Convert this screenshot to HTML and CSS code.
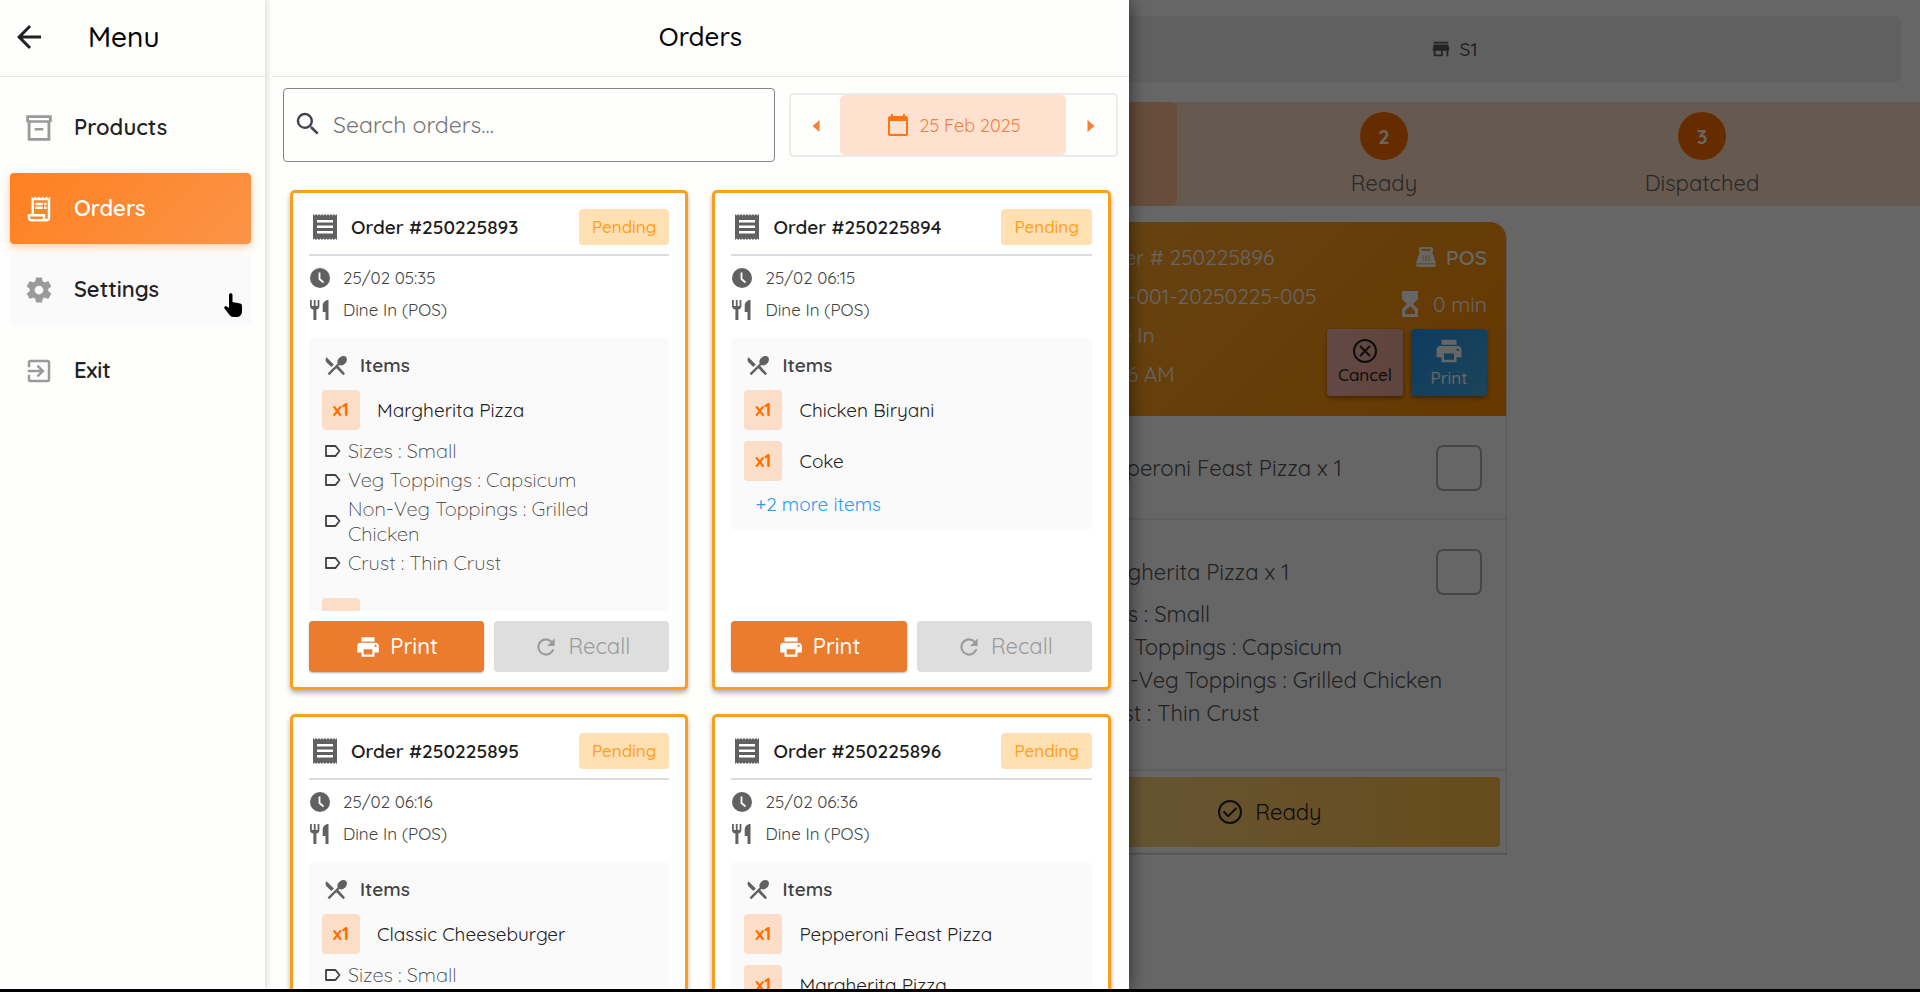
FILE: index.html
```html
<!DOCTYPE html>
<html lang="en">

<head>
    <meta charset="UTF-8">
    <meta name="viewport" content="width=device-width, initial-scale=1.0">
    <title>Orders</title>
    <link rel="stylesheet" href="styles.css">
</head>

<body>

    <!-- icon sprite -->
    <svg class="sprite" aria-hidden="true">
        <symbol id="i-back" viewBox="0 0 24 24"><path d="M20 11H7.83l5.59-5.59L12 4l-8 8 8 8 1.41-1.41L7.83 13H20v-2z"/></symbol>
        <symbol id="i-archive" viewBox="0 0 24 24"><path d="M21 3H3v5h1v13h16V8h1V3zM5 5h14v1.500H5V5zm13 14H6V8.300h12V19zm-9-7h6v1.800H9V12z"/></symbol>
        <symbol id="i-receipt-long" viewBox="0 0 24 24"><path d="M19.500 3.500 18 2l-1.500 1.500L15 2l-1.500 1.500L12 2l-1.500 1.500L9 2 7.500 3.500 6 2v14H3v3c0 1.660 1.340 3 3 3h12c1.660 0 3-1.340 3-3V2l-1.500 1.500zM15 20H6c-.55 0-1-.45-1-1v-1h10v2zm4-1c0 .55-.45 1-1 1s-1-.45-1-1v-3H8V5h11v14z"/><path d="M9 7h6v2H9zM16 7h2v2h-2zM9 10h6v2H9zM16 10h2v2h-2z"/></symbol>
        <symbol id="i-gear" viewBox="0 0 24 24"><path d="M19.430 12.980c.04-.32.07-.64.07-.98s-.03-.66-.07-.98l2.110-1.650c.19-.15.24-.42.12-.64l-2-3.460c-.12-.22-.39-.3-.61-.22l-2.490 1c-.52-.4-1.080-.73-1.690-.98l-.38-2.650C14.460 2.180 14.250 2 14 2h-4c-.25 0-.46.18-.49.42l-.38 2.650c-.61.25-1.170.59-1.690.98l-2.490-1c-.23-.09-.49 0-.61.22l-2 3.460c-.13.22-.07.49.12.64l2.110 1.650c-.04.32-.07.65-.07.98s.03.66.07.98l-2.110 1.650c-.19.15-.24.42-.12.64l2 3.460c.12.22.39.3.61.22l2.490-1c.52.4 1.080.73 1.690.98l.38 2.650c.03.24.24.42.49.42h4c.25 0 .46-.18.49-.42l.38-2.650c.61-.25 1.170-.59 1.690-.98l2.490 1c.23.09.49 0 .61-.22l2-3.460c.12-.22.07-.49-.12-.64l-2.110-1.650zM12 15.500c-1.930 0-3.500-1.570-3.500-3.500s1.570-3.500 3.500-3.500 3.500 1.570 3.500 3.500-1.570 3.500-3.500 3.500z"/></symbol>
        <symbol id="i-exit" viewBox="0 0 24 24"><path d="M10.090 15.590 11.500 17l5-5-5-5-1.410 1.410L12.670 11H3v2h9.670l-2.580 2.590zM19 3H5c-1.110 0-2 .9-2 2v4h2V5h14v14H5v-4H3v4c0 1.100.89 2 2 2h14c1.100 0 2-.9 2-2V5c0-1.100-.9-2-2-2z"/></symbol>
        <symbol id="i-search" viewBox="0 0 24 24"><path d="M15.500 14h-.79l-.28-.27A6.470 6.470 0 0 0 16 9.500 6.500 6.500 0 1 0 9.500 16c1.610 0 3.090-.59 4.230-1.570l.27.28v.79l5 4.990L20.490 19l-4.990-5zm-6 0C7.010 14 5 11.990 5 9.500S7.010 5 9.500 5 14 7.010 14 9.500 11.990 14 9.500 14z"/></symbol>
        <symbol id="i-calendar" viewBox="0 0 24 24"><path d="M20 3h-1V1h-2v2H7V1H5v2H4c-1.100 0-2 .9-2 2v16c0 1.100.9 2 2 2h16c1.100 0 2-.9 2-2V5c0-1.100-.9-2-2-2zm0 18H4V8h16v13z"/></symbol>
        <symbol id="i-left" viewBox="0 0 7 12"><path d="M7 0v12L0 6z"/></symbol>
        <symbol id="i-right" viewBox="0 0 7 12"><path d="M0 0v12l7-6z"/></symbol>
        <symbol id="i-receipt" viewBox="0 0 24 26"><path d="M0 0l1.500 1.500L3 0l1.500 1.500L6 0l1.500 1.500L9 0l1.500 1.500L12 0l1.500 1.500L15 0l1.500 1.500L18 0l1.500 1.500L21 0l1.500 1.500L24 0v26l-1.500-1.500L21 26l-1.500-1.500L18 26l-1.500-1.500L15 26l-1.500-1.500L12 26l-1.500-1.500L9 26l-1.500-1.500L6 26l-1.500-1.500L3 26l-1.500-1.500L0 26z"/><path fill="#fff" d="M4 6h16v2.500H4zM4 11.500h16V14H4zM4 17h16v2.500H4z"/></symbol>
        <symbol id="i-clock" viewBox="0 0 20 20"><circle cx="10" cy="10" r="10"/><path d="M9.500 4.500V11l4 3.500" fill="none" stroke="#fff" stroke-width="1.800"/></symbol>
        <symbol id="i-dine" viewBox="0 0 20 20"><path d="M0 0h1.800v6h2V0h1.800v6h2V0h1.800v6c0 2-1.300 3.300-3 3.600V20H3.400V9.600C1.500 9.200 0 8 0 6zM18.500 0v20h-3v-8h-2.800V6c0-3.500 2.300-6 5.800-6z"/></symbol>
        <symbol id="i-cutlery" viewBox="0 0 22 20"><path d="M1.500 1.200 8.800 8.400 6.300 11 1.500 6.300C.2 5 .2 2.600 1.500 1.200z"/><path d="M13.300 10 20 17.600 18.300 19.300 11.300 12.300 4.300 19.300 2.600 17.600 12.700 7.500C11.900 5.700 12.500 3.400 14.400 1.700 16.700-.4 19.700-.5 21.100 1.100c1.400 1.600 1 4.400-1 6.500-1.800 1.800-4.100 2.400-5.700 1.500z"/></symbol>
        <symbol id="i-label" viewBox="0 0 16 12"><path d="M1 1h9.500l4 5-4 5H1z" fill="none" stroke="currentColor" stroke-width="1.800" stroke-linejoin="round"/></symbol>
        <symbol id="i-print" viewBox="0 0 24 24"><path fill-rule="evenodd" d="M19 8H5c-1.660 0-3 1.340-3 3v6h4v4h12v-4h4v-6c0-1.660-1.340-3-3-3zm-3 11H8v-5h8v5zm3-7c-.55 0-1-.45-1-1s.45-1 1-1 1 .45 1 1-.45 1-1 1zM18 3H6v4h12V3z"/></symbol>
        <symbol id="i-refresh" viewBox="0 0 24 24"><path d="M17.650 6.350A7.960 7.960 0 0 0 12 4a8 8 0 1 0 7.730 10h-2.080A6 6 0 1 1 12 6c1.660 0 3.140.69 4.220 1.780L13 11h7V4l-2.350 2.350z"/></symbol>
        <symbol id="i-store" viewBox="0 0 24 24"><path d="M20 4H4v2h16V4zm1 10v-2l-1-5H4l-1 5v2h1v6h10v-6h4v6h2v-6h1zm-9 4H6v-4h6v4z"/></symbol>
        <symbol id="i-pos" viewBox="0 0 20 20"><path fill-rule="evenodd" d="M5 0h10c1 0 2 .9 2 2v2c0 .8-.4 1.500-1.100 1.800.6.2.9.7 1.100 1.400L20 16.500H0L3 7.200c.2-.7.5-1.200 1.100-1.400C3.400 5.500 3 4.800 3 4V2c0-1.100 1-2 2-2zm.5 2v1.800h9V2z"/><path d="M0 17.300h20c0 1.700-.8 2.700-2 2.700H2c-1.200 0-2-1-2-2.700z"/><path d="M7 8.500v5.500M10 8.500v5.500M13 8.500v5.500" stroke="#ff9416" stroke-width=".7"/></symbol>
        <symbol id="i-hourglass" viewBox="0 0 16 26"><path fill-rule="evenodd" d="M0 0h16v8l-5 5 5 5v8H0v-8l5-5-5-5zm8 15-5 5v3h10v-3z"/></symbol>
        <symbol id="i-cancel" viewBox="0 0 24 24"><circle cx="12" cy="12" r="11" fill="none" stroke="currentColor" stroke-width="2"/><path d="m7 7 10 10M17 7 7 17" fill="none" stroke="currentColor" stroke-width="2"/></symbol>
        <symbol id="i-check" viewBox="0 0 24 24"><circle cx="12" cy="12" r="11" fill="none" stroke="currentColor" stroke-width="2"/><path d="m5.500 11.500 4.700 4.700L18.500 8" fill="none" stroke="currentColor" stroke-width="2"/></symbol>
        <symbol id="i-hand" viewBox="0 0 18 24"><path d="M5 2c0-2.500 3.500-2.500 3.500 0v7l7.500 1.500c1.300.3 2 1.200 2 2.500v5c0 3.500-2 6-5 6H9.500c-1.800 0-3-.7-4-2L.5 15.500c-1-1.500.7-3 2.200-2L5 15z"/></symbol>
    </svg>

    <div class="screen">

        <!-- kitchen board, sits under the drawer -->
        <main class="board">
            <header class="board-top">
                <div class="store">
                    <svg class="icon icon-22"><use href="#i-store"/></svg>
                    <span>S1</span>
                </div>
            </header>

            <ol class="stepper">
                <li class="step step-active"><span class="step-num">1</span>Preparing</li>
                <li class="step"><span class="step-num">2</span>Ready</li>
                <li class="step"><span class="step-num">3</span>Dispatched</li>
            </ol>

            <section class="tickets">
                <article class="ticket">
                    <header class="ticket-head">
                        <div class="ticket-info">
                            <p>Order # 250225896</p>
                            <p>POS-001-20250225-005</p>
                            <p>Dine In</p>
                            <p>06:36 AM</p>
                        </div>
                        <div class="ticket-side">
                            <p class="source"><svg class="icon icon-20"><use href="#i-pos"/></svg>POS</p>
                            <p><svg class="icon icon-26"><use href="#i-hourglass"/></svg>0 min</p>
                            <div class="ticket-actions">
                                <button class="tile tile-cancel" type="button"><svg class="icon icon-24"><use href="#i-cancel"/></svg>Cancel</button>
                                <button class="tile tile-print" type="button"><svg class="icon icon-30"><use href="#i-print"/></svg>Print</button>
                            </div>
                        </div>
                    </header>
                    <div class="ticket-item">
                        <label for="done1">Pepperoni Feast Pizza x 1</label>
                        <input type="checkbox" id="done1">
                    </div>
                    <div class="ticket-item">
                        <label for="done2">Margherita Pizza x 1</label>
                        <input type="checkbox" id="done2">
                        <ul class="ticket-mods">
                            <li>Sizes : Small</li>
                            <li>Veg Toppings : Capsicum</li>
                            <li>Non-Veg Toppings : Grilled Chicken</li>
                            <li>Crust : Thin Crust</li>
                        </ul>
                    </div>
                    <footer class="ticket-foot">
                        <button class="ready" type="button"><svg class="icon icon-24"><use href="#i-check"/></svg>Ready</button>
                    </footer>
                </article>
            </section>
        </main>

        <div class="scrim"></div>

        <div class="drawer">
            <nav class="menu">
                <header class="menu-head">
                    <button class="back" type="button" aria-label="Back"><svg class="icon icon-36"><use href="#i-back"/></svg></button>
                    <h2>Menu</h2>
                </header>
                <div class="menu-list">
                    <a class="menu-item" href="#products"><svg class="icon icon-34"><use href="#i-archive"/></svg>Products</a>
                    <a class="menu-item menu-active" href="#orders"><svg class="icon icon-30"><use href="#i-receipt-long"/></svg>Orders</a>
                    <a class="menu-item menu-hover" href="#settings"><svg class="icon icon-30"><use href="#i-gear"/></svg>Settings
                        <svg class="pointer"><use href="#i-hand"/></svg></a>
                    <a class="menu-item" href="#exit"><svg class="icon icon-30"><use href="#i-exit"/></svg>Exit</a>
                </div>
            </nav>

            <section class="orders" id="orders">
                <header class="orders-head">
                    <h1>Orders</h1>
                </header>

                <div class="filters">
                    <div class="search">
                        <svg class="icon icon-30"><use href="#i-search"/></svg>
                        <input type="text" placeholder="Search orders..." aria-label="Search orders">
                    </div>
                    <div class="date">
                        <button class="date-arrow" type="button" aria-label="Previous day"><svg class="icon icon-arrow"><use href="#i-left"/></svg></button>
                        <button class="date-value" type="button"><svg class="icon icon-24"><use href="#i-calendar"/></svg>25 Feb 2025</button>
                        <button class="date-arrow" type="button" aria-label="Next day"><svg class="icon icon-arrow"><use href="#i-right"/></svg></button>
                    </div>
                </div>

                <div class="order-grid">
                    <article class="order">
                        <header class="order-head">
                            <svg class="icon icon-26"><use href="#i-receipt"/></svg>
                            <h3>Order #250225893</h3>
                            <span class="status">Pending</span>
                        </header>
                        <div class="order-meta">
                            <p><svg class="icon icon-20"><use href="#i-clock"/></svg>25/02 05:35</p>
                            <p><svg class="icon icon-20"><use href="#i-dine"/></svg>Dine In (POS)</p>
                        </div>
                        <div class="order-body">
                            <div class="items">
                                <h4><svg class="icon icon-22"><use href="#i-cutlery"/></svg>Items</h4>
                                <div class="item"><span class="qty">x1</span>Margherita Pizza</div>
                                <ul class="mods">
                                    <li><svg class="icon icon-label"><use href="#i-label"/></svg>Sizes : Small</li>
                                    <li><svg class="icon icon-label"><use href="#i-label"/></svg>Veg Toppings : Capsicum</li>
                                    <li><svg class="icon icon-label"><use href="#i-label"/></svg>Non-Veg Toppings : Grilled Chicken</li>
                                    <li><svg class="icon icon-label"><use href="#i-label"/></svg>Crust : Thin Crust</li>
                                </ul>
                                <div class="item"><span class="qty">x1</span>Coke</div>
                            </div>
                        </div>
                        <footer class="order-foot">
                            <button class="btn btn-print" type="button"><svg class="icon icon-26"><use href="#i-print"/></svg>Print</button>
                            <button class="btn btn-recall" type="button" disabled><svg class="icon icon-26"><use href="#i-refresh"/></svg>Recall</button>
                        </footer>
                    </article>

                    <article class="order">
                        <header class="order-head">
                            <svg class="icon icon-26"><use href="#i-receipt"/></svg>
                            <h3>Order #250225894</h3>
                            <span class="status">Pending</span>
                        </header>
                        <div class="order-meta">
                            <p><svg class="icon icon-20"><use href="#i-clock"/></svg>25/02 06:15</p>
                            <p><svg class="icon icon-20"><use href="#i-dine"/></svg>Dine In (POS)</p>
                        </div>
                        <div class="order-body">
                            <div class="items">
                                <h4><svg class="icon icon-22"><use href="#i-cutlery"/></svg>Items</h4>
                                <div class="item"><span class="qty">x1</span>Chicken Biryani</div>
                                <div class="item"><span class="qty">x1</span>Coke</div>
                                <a class="more" href="#more">+2 more items</a>
                            </div>
                        </div>
                        <footer class="order-foot">
                            <button class="btn btn-print" type="button"><svg class="icon icon-26"><use href="#i-print"/></svg>Print</button>
                            <button class="btn btn-recall" type="button" disabled><svg class="icon icon-26"><use href="#i-refresh"/></svg>Recall</button>
                        </footer>
                    </article>

                    <article class="order">
                        <header class="order-head">
                            <svg class="icon icon-26"><use href="#i-receipt"/></svg>
                            <h3>Order #250225895</h3>
                            <span class="status">Pending</span>
                        </header>
                        <div class="order-meta">
                            <p><svg class="icon icon-20"><use href="#i-clock"/></svg>25/02 06:16</p>
                            <p><svg class="icon icon-20"><use href="#i-dine"/></svg>Dine In (POS)</p>
                        </div>
                        <div class="order-body">
                            <div class="items">
                                <h4><svg class="icon icon-22"><use href="#i-cutlery"/></svg>Items</h4>
                                <div class="item"><span class="qty">x1</span>Classic Cheeseburger</div>
                                <ul class="mods">
                                    <li><svg class="icon icon-label"><use href="#i-label"/></svg>Sizes : Small</li>
                                </ul>
                            </div>
                        </div>
                    </article>

                    <article class="order">
                        <header class="order-head">
                            <svg class="icon icon-26"><use href="#i-receipt"/></svg>
                            <h3>Order #250225896</h3>
                            <span class="status">Pending</span>
                        </header>
                        <div class="order-meta">
                            <p><svg class="icon icon-20"><use href="#i-clock"/></svg>25/02 06:36</p>
                            <p><svg class="icon icon-20"><use href="#i-dine"/></svg>Dine In (POS)</p>
                        </div>
                        <div class="order-body">
                            <div class="items">
                                <h4><svg class="icon icon-22"><use href="#i-cutlery"/></svg>Items</h4>
                                <div class="item"><span class="qty">x1</span>Pepperoni Feast Pizza</div>
                                <div class="item"><span class="qty">x1</span>Margherita Pizza</div>
                            </div>
                        </div>
                    </article>
                </div>
            </section>
        </div>
    </div>

</body>

</html>
```

FILE: styles.css
```css
/* CSS Reset */
html {
    box-sizing: border-box;
    font-size: 16px;
}

*,
*:before,
*:after {
    box-sizing: inherit;
}

body,
h1,
h2,
h3,
h4,
p,
ol,
ul {
    margin: 0;
    padding: 0;
    font-weight: normal;
}

ol,
ul {
    list-style: none;
}

button,
input {
    font: inherit;
    color: inherit;
    border: 0;
    padding: 0;
    margin: 0;
    background: none;
}

a {
    color: inherit;
    text-decoration: none;
}

body {
    background: #000;
    color: #222;
    font-family: "Quicksand", "Inter", "Open Sans", sans-serif;
    font-size: 19px;
    line-height: 25px;
}

.screen {
    position: relative;
    height: calc(100vh - 3px);
    overflow: hidden;
    background: #fff;
}

/* Icons */
.sprite {
    display: none;
}

.icon {
    flex: none;
    fill: currentColor;
}

.icon-20 { width: 20px; height: 20px; }
.icon-22 { width: 22px; height: 22px; }
.icon-24 { width: 24px; height: 24px; }
.icon-26 { width: 26px; height: 26px; }
.icon-30 { width: 30px; height: 30px; }
.icon-34 { width: 34px; height: 34px; }
.icon-36 { width: 36px; height: 36px; }
.icon-arrow { width: 8px; height: 12px; }
.icon-label { width: 16px; height: 12px; }

/* Board */
.board-top {
    display: grid;
    grid-template-columns: 21fr 19fr;
    margin: 16px 19px 20px;
    height: 66px;
    border-radius: 6px;
    background: #f0f0f0;
}

.store {
    grid-column: 2;
    display: flex;
    align-items: center;
    justify-content: center;
    gap: 7px;
    font-weight: 500;
    color: #5a5a5a;
}

.stepper {
    display: flex;
    justify-content: flex-end;
    padding-right: 59px;
    background: #ffe1c8;
}

.step {
    width: 318px;
    height: 104px;
    padding-top: 10px;
    display: flex;
    flex-direction: column;
    align-items: center;
    gap: 11px;
    font-size: 22px;
    color: #666;
}

.step-active {
    width: 222px;
    margin-right: 48px;
    border-radius: 6px;
    background: #ffc096;
}

.step-num {
    display: flex;
    align-items: center;
    justify-content: center;
    width: 48px;
    height: 48px;
    border-radius: 50%;
    background: #ff6e00;
    color: #fff;
    font-size: 20px;
    font-weight: 700;
}

.tickets {
    padding: 16px 0 0 53.8%;
    display: grid;
    grid-template-columns: 474px;
}

.ticket {
    border: 1px solid #e4e4e4;
    border-top: 0;
    border-radius: 16px 16px 0 0;
    font-size: 22px;
}

.ticket-head {
    display: flex;
    justify-content: space-between;
    height: 194px;
    padding: 20px 19px 20px 54px;
    border-radius: 16px 16px 0 0;
    background: linear-gradient(135deg, #ffac34, #ff8c00);
    color: #fff;
    font-size: 21px;
    font-weight: 500;
}

.ticket-info {
    display: flex;
    flex-direction: column;
    gap: 14px;
    padding-top: 3px;
    white-space: nowrap;
}

.ticket-side {
    display: flex;
    flex-direction: column;
    align-items: flex-end;
}

.ticket-side p {
    display: flex;
    align-items: center;
    gap: 10px;
    height: 30px;
    margin-bottom: 17px;
}

.ticket-side p + p {
    margin-bottom: 10px;
}

.source {
    font-weight: 600;
}

.ticket-actions {
    display: flex;
    gap: 8px;
}

.tile {
    display: flex;
    flex-direction: column;
    align-items: center;
    justify-content: center;
    width: 76px;
    height: 67px;
    border-radius: 4px;
    font-size: 17px;
    line-height: 24px;
    box-shadow: 0 2px 4px rgba(0, 0, 0, .4);
}

.tile-cancel {
    background: linear-gradient(90deg, #f5b5aa, #f0aa9a);
    color: #222;
}

.tile-print {
    background: linear-gradient(135deg, #2196f3, #48aadd);
    color: #fff;
}

.ticket-item {
    display: grid;
    grid-template-columns: 1fr 46px;
    align-items: center;
    row-gap: 3px;
    padding: 29px 24px 27px 54px;
    border-bottom: 2px solid #ececec;
    color: #555;
}

.ticket-item input {
    appearance: none;
    width: 46px;
    height: 46px;
    border: 2px solid #b0b0b0;
    border-radius: 7px;
}

.ticket-mods {
    grid-column: 1 / 3;
    line-height: 33px;
    padding-bottom: 12px;
    white-space: nowrap;
}

.ticket-foot {
    padding: 6px;
    border-bottom: 1px solid #c8c8c8;
}

.ready {
    display: flex;
    align-items: center;
    justify-content: center;
    gap: 13px;
    width: 100%;
    height: 70px;
    border-radius: 4px;
    background: linear-gradient(90deg, #ffd78c, #ffbe46);
}

.scrim {
    position: absolute;
    inset: 0;
    background: rgba(0, 0, 0, .6);
}

/* Drawer */
.drawer {
    position: absolute;
    inset: 0 auto 0 0;
    width: 58.8%;
    display: flex;
    background: #fefefd;
    box-shadow: 0 0 16px rgba(0, 0, 0, .6);
}

.menu {
    width: 265px;
    margin-right: 7px;
    box-shadow: 2px 0 6px rgba(0, 0, 0, .15);
}

.menu-head {
    display: flex;
    align-items: center;
    gap: 41px;
    height: 77px;
    padding: 0 0 3px 11px;
    border-bottom: 1px solid #e8e8e8;
}

.menu-head h2,
.orders-head h1 {
    font-size: 28px;
    line-height: 36px;
    font-weight: 500;
    color: #000;
}

.orders-head h1 {
    font-size: 26px;
}

.back {
    height: 36px;
}

.menu-list {
    display: flex;
    flex-direction: column;
    gap: 10px;
    padding: 15px 14px 15px 10px;
}

.menu-item {
    position: relative;
    display: grid;
    grid-template-columns: 58px 1fr;
    align-items: center;
    height: 71px;
    padding-left: 6px;
    border-radius: 4px;
    font-size: 22px;
    font-weight: 600;
}

.menu-item .icon {
    justify-self: center;
    color: #9a9a9a;
    margin-right: 12px;
}

.menu-active {
    background: linear-gradient(135deg, #ff8020, #fb9448);
    box-shadow: 0 3px 8px rgba(255, 128, 32, .4);
    color: #fff;
}

.menu-active .icon {
    color: #fff;
}

.menu-hover {
    background: #fafafa;
}

.pointer {
    position: absolute;
    right: 9px;
    bottom: 8px;
    width: 18px;
    height: 24px;
    fill: #000;
}

.orders {
    flex: 1;
    min-width: 0;
    display: flex;
    flex-direction: column;
}

.orders-head {
    flex: none;
    display: flex;
    align-items: center;
    justify-content: center;
    height: 77px;
    padding-bottom: 3px;
    border-bottom: 1px solid #e8e8e8;
}

/* Filters */
.filters {
    display: flex;
    align-items: center;
    gap: 14px;
    padding: 11px 11px 28px;
}

.search {
    flex: 1;
    display: flex;
    align-items: center;
    gap: 10px;
    height: 74px;
    padding: 0 0 2px 9px;
    border: 1px solid #85858d;
    border-radius: 4px;
    color: #454350;
}

.search input {
    flex: 1;
    min-width: 0;
    font-size: 23px;
    outline: 0;
}

.search input::placeholder {
    color: #777;
}

.date {
    display: flex;
    width: 329px;
    height: 64px;
    border: 2px solid #ebebeb;
    border-radius: 5px;
    color: #f5803a;
}

.date-arrow {
    flex: 1;
}

.date-value {
    display: flex;
    align-items: center;
    justify-content: center;
    gap: 9px;
    width: 226px;
    border-radius: 5px;
    background: #ffe1cf;
    font-size: 18px;
}

.date-value .icon {
    color: #ff7410;
}

/* Order cards */
.order-grid {
    display: grid;
    grid-template-columns: 1fr 1fr;
    grid-auto-rows: 500px;
    gap: 24px;
    padding: 0 18px 24px;
}

.order {
    display: flex;
    flex-direction: column;
    min-width: 0;
    padding: 16px 16px 15px;
    border: 3px solid #fba01c;
    border-radius: 5px;
    background: #fff;
    box-shadow: 0 3px 5px rgba(0, 0, 0, .3);
}

.order-head {
    display: flex;
    align-items: center;
    gap: 13px;
    padding: 0 0 9px 3px;
    border-bottom: 2px solid #dcdce2;
    color: #616161;
}

.order-head h3 {
    flex: 1;
    font-size: 19px;
    font-weight: 600;
    color: #1c1c1c;
}

.status {
    padding: 0 13px;
    border-radius: 4px;
    background: #ffe0b2;
    color: #ff9f1c;
    font-size: 17px;
    font-weight: 500;
    line-height: 36px;
}

.order-meta {
    display: flex;
    flex-direction: column;
    gap: 8px;
    padding: 10px 1px 16px;
    font-size: 17px;
    line-height: 24px;
    color: #424242;
}

.order-meta p {
    display: flex;
    align-items: center;
    gap: 13px;
}

.order-meta .icon,
.items h4 .icon {
    color: #616161;
}

.order-body {
    flex: 1;
    min-height: 0;
    overflow: hidden;
}

.items {
    display: flex;
    flex-direction: column;
    gap: 9px;
    padding: 13px;
    border-radius: 5px;
    background: #fafafa;
}

.items h4 {
    display: flex;
    align-items: center;
    gap: 13px;
    height: 29px;
    padding-left: 3px;
    font-size: 19px;
    font-weight: 600;
    color: #424242;
}

.item {
    display: flex;
    align-items: center;
    gap: 17px;
    padding: 1px 0;
}

.qty {
    width: 38px;
    border-radius: 4px;
    background: #fcddc7;
    color: #ff6d00;
    font-size: 18px;
    font-weight: 700;
    line-height: 40px;
    text-align: center;
}

.mods {
    display: flex;
    flex-direction: column;
    gap: 4px;
    margin-top: -2px;
    padding: 0 26px 13px 3px;
    font-size: 20px;
    font-weight: 300;
    color: #424242;
}

.mods li {
    display: flex;
    align-items: center;
    gap: 7px;
}

.more {
    padding: 1px 0 0 11px;
    color: #2b98f0;
}

.order-foot {
    display: flex;
    gap: 10px;
    padding-top: 10px;
}

.btn {
    flex: 1;
    display: flex;
    align-items: center;
    justify-content: center;
    gap: 9px;
    height: 51px;
    border-radius: 4px;
    font-size: 22px;
}

.btn-print {
    background: #eb7b2d;
    color: #fff;
    font-weight: 500;
    box-shadow: 0 1px 2px rgba(0, 0, 0, .3);
}

.btn-recall {
    background: #dedede;
    color: #9b9b9b;
}
```
